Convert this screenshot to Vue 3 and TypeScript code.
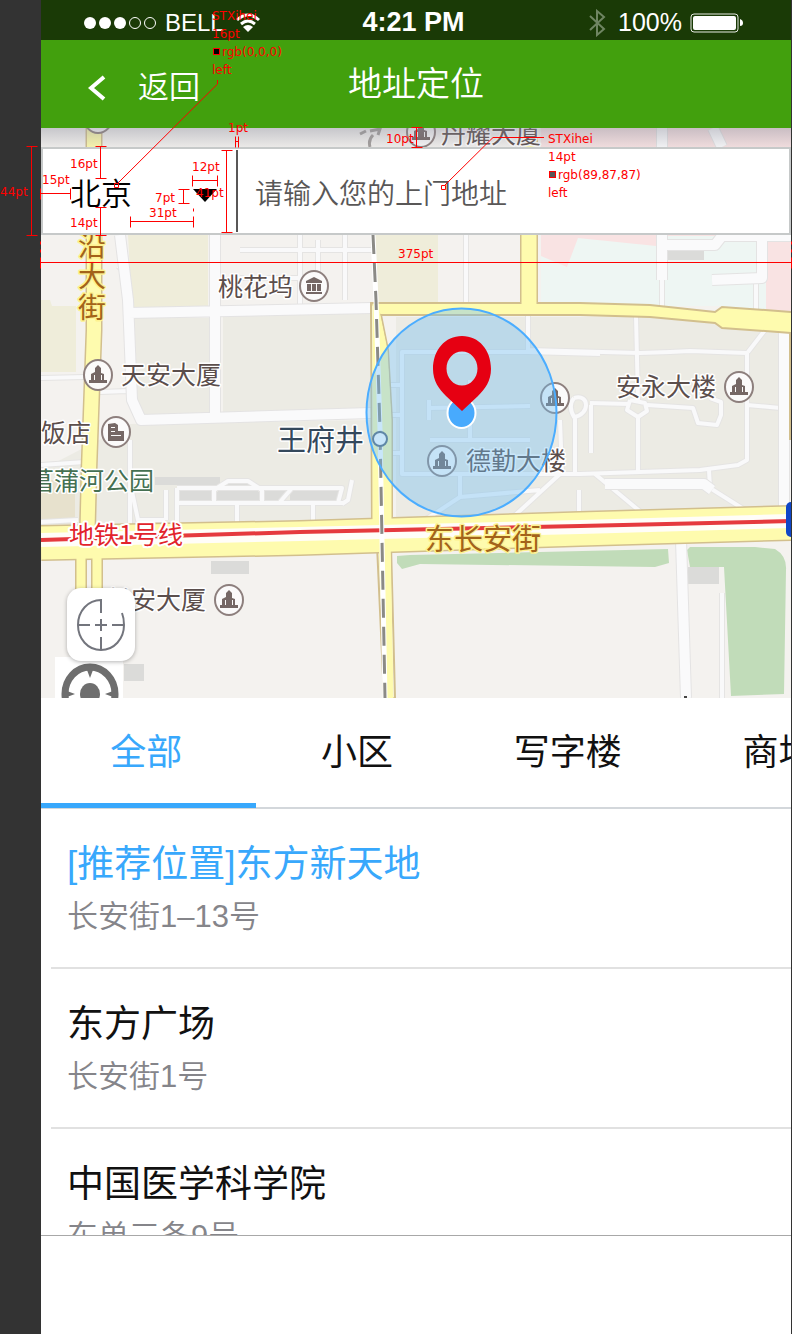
<script setup lang="ts">
import { ref } from 'vue'

interface Label { text: string; x: number; y: number; kind?: string }
interface Poi { x: number; y: number; icon: string }
interface Place { name: string; address: string; recommended?: boolean }
interface Note { text: string; x: number; y: number }

const city = ref('北京')
const address = ref('')
const activeTab = ref(0)
const tabs: string[] = ['全部', '小区', '写字楼', '商场']

const places: Place[] = [
  { name: '[推荐位置]东方新天地', address: '长安街1–13号', recommended: true },
  { name: '东方广场', address: '长安街1号' },
  { name: '中国医学科学院', address: '东单三条9号' },
]

const labels: Label[] = [
  { text: '丹耀大厦', x: 441, y: 143 },
  { text: '桃花坞', x: 218, y: 296 },
  { text: '天安大厦', x: 121, y: 384 },
  { text: '饭店', x: 41, y: 442 },
  { text: '安永大楼', x: 616, y: 396 },
  { text: '德勤大楼', x: 466, y: 470 },
  { text: '长安大厦', x: 106, y: 609 },
  { text: '菖蒲河公园', x: 29, y: 490, kind: 'park' },
  { text: '王府井', x: 277, y: 451, kind: 'station' },
  { text: '沿', x: 78, y: 256, kind: 'road' },
  { text: '大', x: 78, y: 287, kind: 'road' },
  { text: '街', x: 78, y: 318, kind: 'road' },
  { text: '东长安街', x: 425, y: 550, kind: 'road big' },
  { text: '地铁1号线', x: 69, y: 544, kind: 'metro' },
]

const pois: Poi[] = [
  { x: 98, y: 118, icon: 'tower' },
  { x: 421, y: 132, icon: 'tower' },
  { x: 98, y: 375, icon: 'tower' },
  { x: 116, y: 432, icon: 'hotel' },
  { x: 314, y: 286, icon: 'bank' },
  { x: 442, y: 461, icon: 'tower' },
  { x: 555, y: 398, icon: 'tower' },
  { x: 739, y: 387, icon: 'tower' },
  { x: 229, y: 600, icon: 'tower' },
]

const icons: Record<string, string> = {
  tower: 'M-9 8V5H-7V-1L-3 -3V-7L0 -10L3 -7V-2L6 -1V5H9V8Z M-4 0V5H-3V0Z M3 0V5H4V0Z',
  hotel: 'M-8 9V-8L-1 -9L2 -7V-1H8V9Z M-5 -5V-4H-1V-5Z M-5 -1V0H-1V-1Z M-5 3V4H5V3Z',
  bank: 'M0 -9L8 -5V-3H-8V-5Z M-7 -2H-3V5H-7Z M-2 -2H2V5H-2Z M3 -2H7V5H3Z M-8 6H8V8H-8Z',
}

const thinRoads: string[] = [
  'M41 378L85 377 M100 392L128 391L140 422L372 413',
  'M41 465L85 462 M130 440V525',
  'M118 266L126 272L132 400',
  'M300 235V310 M345 235V300 M318 240V290 M240 250H372 M240 278H300',
  'M41 522L78 520 M130 482L138 520H165 M166 490V520 M177 488V525 M177 503H345 M237 503V522 M214 502V490L228 481H248L262 490V502 M177 488H340 M280 502L292 488H342L338 503 M352 480L348 500L342 504 M313 505V522',
  'M466 235V303 M528 315V350L640 353L670 352L690 351L747 353V460L738 465L700 470L580 474H402V352H430',
  'M401 385H388 M401 415H390 M401 453H390 M402 352H528L600 354',
  'M429 400V420M429 408L530 406 M470 380V440 M430 440H530 M460 475V497L425 520 M460 497L540 490 M560 474L512 518',
  'M574 398C590 393 590 415 574 417C570 410 570 403 574 398 M575 418V474 M560 420L562 474 M590 403L630 404 M579 490V515',
  'M636 316L638 400 M630 400L627 410L638 417L647 411L645 403L630 400 M638 417V471',
  'M647 405L693 408L698 423L717 425L721 415V402L710 398 M747 405L791 409',
  'M765 330L748 352 M595 474L642 513 M709 470L710 488L745 510 M591 405V453',
  'M722 593V698 M662 235V310 M756 280V310',
]

const streets =
  'M215 235V415 M120 235L128 300L132 400L141 420L371 413 M128 313L372 308 M681 540L686 698 M662 128V280 M713 128L722 147 M662 245H715L722 236H791 M762 236V278L712 280 M605 484H704L712 490 M784 330V510'

const notes: Note[] = [
  { text: 'STXihei', x: 212, y: 20 },
  { text: '16pt', x: 212, y: 38 },
  { text: 'rgb(0,0,0)', x: 222, y: 56 },
  { text: 'left', x: 212, y: 74 },
  { text: '1pt', x: 228, y: 132 },
  { text: '12pt', x: 192, y: 171 },
  { text: '16pt', x: 70, y: 168 },
  { text: '15pt', x: 42, y: 184 },
  { text: '44pt', x: 0, y: 196 },
  { text: '14pt', x: 70, y: 227 },
  { text: '7pt', x: 155, y: 202 },
  { text: '31pt', x: 149, y: 217 },
  { text: '41pt', x: 196, y: 197 },
  { text: '10pt', x: 386, y: 143 },
  { text: '375pt', x: 398, y: 258 },
  { text: 'STXihei', x: 548, y: 143 },
  { text: '14pt', x: 548, y: 161 },
  { text: 'rgb(89,87,87)', x: 558, y: 179 },
  { text: 'left', x: 548, y: 197 },
]

const hBar = (x1: number, x2: number, y: number): string =>
  `M${x1} ${y}H${x2}M${x1} ${y - 5}v11M${x2} ${y - 5}v11`
const vBar = (x: number, y1: number, y2: number): string =>
  `M${x} ${y1}V${y2}M${x - 5} ${y1}h11M${x - 5} ${y2}h11`

const measures: string = [
  vBar(31, 146, 235),
  hBar(40, 70, 193),
  vBar(100, 146, 178),
  vBar(100, 207, 235),
  hBar(130, 193, 221),
  hBar(192, 217, 180),
  vBar(183, 189, 203),
  vBar(226, 150, 232),
  hBar(235, 238, 141),
  vBar(416, 127, 147),
  hBar(40, 791, 262),
  'M193 208v3M40 241v3M40 249v3M791 241v3M791 249v3',
].join('')
</script>

<template>
  <div class="board">
    <main class="screen">
      <div class="status">
        <div class="carrier">
          <svg class="signal" viewBox="0 0 74 14" aria-hidden="true">
            <circle cx="7" cy="7" r="6" /><circle cx="22" cy="7" r="6" /><circle cx="37" cy="7" r="6" />
            <circle class="hollow" cx="52" cy="7" r="5.5" /><circle class="hollow" cx="67" cy="7" r="5.5" />
          </svg>
          <span class="operator">BELL</span>
          <svg class="wifi" viewBox="0 0 26 20" aria-hidden="true">
            <path class="arc" d="M2 7Q13 -3 24 7M6 11Q13 5 20 11" /><path d="M8 14Q13 10 18 14L13 19Z" />
          </svg>
        </div>
        <span class="clock">4:21 PM</span>
        <div class="power">
          <svg class="bluetooth" viewBox="0 0 18 28" aria-hidden="true"><path d="M2 7L16 20L9 26V2L16 8L2 21" /></svg>
          <span>100%</span>
          <svg class="battery" viewBox="0 0 54 20" aria-hidden="true">
            <rect class="case" x="1" y="1" width="47" height="18" rx="3" /><rect x="3" y="3" width="43" height="14" rx="2" />
            <path d="M50 6Q53 7 53 10Q53 13 50 13Z" />
          </svg>
        </div>
      </div>

      <header class="nav">
        <button class="back" type="button">
          <svg viewBox="0 0 18 26" aria-hidden="true"><path d="M16 2L3 13L16 24" /></svg>
          <span>返回</span>
        </button>
        <h1>地址定位</h1>
      </header>

      <section class="map" aria-label="地图">
        <svg class="tiles" viewBox="41 128 750 570" preserveAspectRatio="xMidYMid slice">
          <defs>
            <linearGradient id="shade" x1="0" y1="0" x2="0" y2="1">
              <stop offset="0" stop-color="#888a98" stop-opacity=".42" />
              <stop offset="1" stop-color="#888a98" stop-opacity="0" />
            </linearGradient>
          </defs>
          <rect x="41" y="128" width="750" height="570" fill="#f4f2ef" />
          <g fill="#ecebe4">
            <path d="M133 318H209V413L143 416L136 400Z M223 316L370 310V412L223 417Z" />
            <path d="M41 470L130 424L371 420V525H41Z M396 317H640L700 322L783 332V508L396 520Z" />
          </g>
          <g fill="#efedda">
            <path d="M128 235H208V308L132 309Z M41 300H50L52 306H76V372H41Z M375 235H438V303H378Z" />
          </g>
          <path d="M541 128H791V312L720 306L650 303H541Z" fill="#f9e3e3" />
          <path d="M578 238L656 246L664 236H760L766 280V311L720 306H541V256L567 267Z" fill="#eef6f3" />
          <path d="M41 480H75V524H41Z" fill="#e7e1cd" />
          <g fill="#dbdbd9">
            <path d="M668 250H704V260H668Z M155 477H220V485H155Z M179 490H212V500H179Z M217 492L228 484H250L259 492V500H217Z M264 490H288L280 500H264Z M290 490H338V500H290Z" />
            <path d="M211 561H249V574H211Z M124 664H144V681H124Z M688 567H719V584H688Z" />
          </g>
          <g fill="#c1dcb9">
            <path d="M397 556L410 555L668 549L669 563L655 567L420 564L402 569L397 563Z" />
            <path d="M687 550L690 547H755L775 549Q787 556 786 570L784 694L731 696L724 567H690Z" />
          </g>

          <g class="lane-edge"><path v-for="(d, i) in thinRoads" :key="i" :d="d" /></g>
          <g class="lane"><path v-for="(d, i) in thinRoads" :key="i" :d="d" /></g>
          <path class="street-edge" :d="streets" />
          <path class="street" :d="streets" />

          <g class="avenue-edge">
            <path d="M94 128V330L89 470L87 550" stroke-width="17" />
            <path d="M81 545V600 M97 545V600" stroke-width="12" />
            <path d="M529 128V308" stroke-width="18" />
            <path d="M371 303L379 305L388 350L392 420V530H372Z M377 545H391L395 698H384Z" stroke-width="2" />
            <path d="M41 543L300 538L580 529L791 523" stroke-width="36" />
            <path d="M791 332V440" stroke-width="4" />
          </g>
          <path
            d="M372 303H580L650 305L715 312L722 307L792 312V333L722 328L715 323L650 317L580 315H380Z"
            fill="#fefbae" stroke="#d2bf8d" stroke-width="2" />
          <g class="avenue">
            <path d="M94 128V330L89 470L87 550" stroke-width="14" />
            <path d="M81 540V600 M97 540V600" stroke-width="9" />
            <path d="M529 128V308" stroke-width="15" />
            <path d="M373 304L378 306L387 350L391 420V535H373Z M379 540H390L393 698H385Z" fill="#fefbae" stroke-width="1" />
            <path d="M41 543L300 538L580 529L791 523" stroke-width="33" />
          </g>
          <path d="M41 540L300 534L580 527L791 521" stroke="#fffdf8" stroke-width="14" fill="none" />
          <path d="M41 540L300 532L580 526L791 521" stroke="#e53a3e" stroke-width="4" fill="none" />

          <path d="M373 235L376 300L380 430L382 540L385 698" stroke="#fff" stroke-width="5" fill="none" />
          <path d="M373 235L376 300L380 430L382 540L385 698" stroke="#8b8a86" stroke-width="3" stroke-dasharray="19 9" fill="none" />
          <rect x="786" y="502" width="14" height="35" rx="5" fill="#1046c6" />
          <circle cx="380" cy="439" r="7" fill="#fff" stroke="#56677a" stroke-width="2" />
          <path d="M360 134L366 131M370 131L380 129L378 135M370 147Q368 140 373 135" stroke="#a39e9b" stroke-width="3" fill="none" />
          <rect x="684" y="696" width="3" height="2" fill="#444" />

          <g v-for="(p, i) in pois" :key="i" class="poi" :transform="`translate(${p.x} ${p.y})`">
            <ellipse rx="14" ry="15" /><path :d="icons[p.icon]" />
          </g>
          <text v-for="(l, i) in labels" :key="i" class="label" :class="l.kind" :x="l.x" :y="l.y">{{ l.text }}</text>

          <ellipse cx="461.5" cy="412.5" rx="95" ry="104" fill="#6fbdf3" fill-opacity=".38" stroke="#4badff" stroke-width="2" />
          <ellipse cx="461.5" cy="413" rx="14" ry="15" fill="#48aafd" stroke="#fff" stroke-width="2" />
          <path
            d="M462 336C445 336 433 350 433 369C433 381 439 389 446 396L462 411L478 396C485 389 491 381 491 369C491 350 479 336 462 336ZM462 351.500C453.500 351.500 446.500 359 446.500 368.500C446.500 378 453.500 385.500 462 385.500C470.500 385.500 477.500 378 477.500 368.500C477.500 359 470.500 351.500 462 351.500Z"
            fill="#e60012" fill-rule="evenodd" />
          <rect x="41" y="128" width="750" height="24" fill="url(#shade)" />
        </svg>

        <form class="search" @submit.prevent>
          <label class="city">
            <span class="hidden">城市</span>
            <select v-model="city"><option>北京</option></select>
            <svg viewBox="0 0 24 14" aria-hidden="true"><path d="M0 0H24L12 13Z" /></svg>
          </label>
          <input v-model="address" type="text" aria-label="上门地址" placeholder="请输入您的上门地址">
        </form>

        <div class="tools">
          <button class="compass" type="button" aria-label="指南针">
            <svg viewBox="0 0 50 54">
              <path d="M25 15V2C12 2 2 13 2 27S12 52 25 52S48 41 48 27Q48 20 46 15M2 27H14M36 27H48M25 39V52M19 27H31M25 21V33" />
            </svg>
          </button>
          <button class="locate" type="button" aria-label="定位">
            <svg viewBox="0 0 68 41">
              <ellipse cx="35" cy="37" rx="25" ry="27" fill="none" stroke="#6e6e6e" stroke-width="7" />
              <ellipse cx="35" cy="37" rx="10" ry="11" fill="#6e6e6e" />
              <path d="M32 13H38L35 21Z M12 34L20 37L12 40Z M58 34L50 37L58 40Z" fill="#6e6e6e" />
            </svg>
          </button>
        </div>
      </section>

      <nav class="tabs">
        <button
          v-for="(tab, i) in tabs" :key="tab" type="button"
          :class="{ active: activeTab === i }" @click="activeTab = i">{{ tab }}</button>
      </nav>

      <ul class="places">
        <li v-for="place in places" :key="place.name" :class="{ recommended: place.recommended }">
          <h2>{{ place.name }}</h2>
          <p>{{ place.address }}</p>
        </li>
      </ul>
      <footer class="foot"></footer>
    </main>

    <svg class="notes" viewBox="0 0 792 1334" preserveAspectRatio="xMinYMin meet">
      <path class="measure" transform="translate(.5 .5)" :d="measures" />
      <path class="leader" d="M217.500 80V84L118 183M544 137.500H493L445 185" />
      <path class="node" d="M114.500 183.500h4v4h-4ZM441.500 185.500h4v4h-4Z" />
      <rect class="swatch" x="213.500" y="48.500" width="6" height="6" fill="#000" />
      <rect class="swatch" x="549.500" y="171.500" width="6" height="6" fill="#595757" />
      <text v-for="(n, i) in notes" :key="i" :x="n.x" :y="n.y">{{ n.text }}</text>
    </svg>
  </div>
</template>

<style>
body {
  margin: 0;
  background: #333;
}
</style>

<style scoped>
* {
  box-sizing: border-box;
}

.board {
  position: relative;
  padding: 0 1px 0 41px;
  background: #333;
  font-family: "Liberation Sans", "Noto Sans CJK SC", sans-serif;
}

.screen {
  display: flex;
  flex-direction: column;
  height: 100vh;
  background: #fff;
  overflow: hidden;
}

button,
input,
select {
  margin: 0;
  padding: 0;
  border: 0;
  background: none;
  font: inherit;
  color: inherit;
  border-radius: 0;
}

.status {
  flex: none;
  display: grid;
  grid-template-columns: 1fr auto 1fr;
  align-items: center;
  height: 40px;
  padding: 5px 47px 0 42px;
  background: #1a3a06;
  color: #fff;
  line-height: 35px;
}

.status svg {
  fill: #fff;
}

.carrier,
.power {
  display: flex;
  align-items: center;
}

.power {
  justify-content: flex-end;
  font-size: 25px;
  gap: 8px;
}

.signal {
  width: 74px;
  height: 14px;
}

.signal .hollow {
  fill: none;
  stroke: #fff;
}

.operator {
  margin-left: 8px;
  font-size: 24px;
}

.wifi {
  width: 26px;
  height: 20px;
  margin-left: 11px;
}

.wifi .arc {
  fill: none;
  stroke: #fff;
  stroke-width: 3;
}

.clock {
  font-size: 27px;
  font-weight: 700;
}

.status .bluetooth {
  width: 18px;
  height: 28px;
  margin-right: 4px;
  fill: none;
  stroke: #6f8562;
  stroke-width: 2;
}

.battery {
  width: 54px;
  height: 20px;
}

.status .case {
  fill: none;
  stroke: #e6eae3;
}

.nav {
  flex: none;
  display: grid;
  grid-template-columns: 1fr auto 1fr;
  align-items: center;
  height: 88px;
  background: #42a00d;
  color: #fff;
}

.back {
  display: flex;
  align-items: center;
  gap: 32px;
  padding-left: 47px;
  font-size: 31px;
  font-weight: 350;
  line-height: 46px;
}

.back svg {
  width: 18px;
  height: 26px;
  margin-top: 8px;
  fill: none;
  stroke: #fff;
  stroke-width: 4;
}

.back span {
  margin-top: 8px;
}

.nav h1 {
  margin: 0;
  font-size: 34px;
  font-weight: 350;
  line-height: 50px;
}

.map {
  flex: none;
  position: relative;
  height: 570px;
  padding-top: 19px;
  overflow: hidden;
}

.tiles {
  position: absolute;
  inset: 0;
  width: 100%;
  height: 100%;
}

.lane,
.lane-edge,
.street,
.street-edge,
.avenue,
.avenue-edge {
  fill: none;
  stroke-linejoin: round;
}

.lane { stroke: #f9f9fa; stroke-width: 4; }
.lane-edge { stroke: #e5e4e3; stroke-width: 6; }
.street { stroke: #fafafb; stroke-width: 10; }
.street-edge { stroke: #e4e3e3; stroke-width: 12; }
.avenue { stroke: #fefbae; }
.avenue-edge { stroke: #d2bf8d; }

.poi ellipse {
  fill: #fbfafa;
  stroke: #8d7f7d;
  stroke-width: 2;
}

.poi path {
  fill: #756765;
  fill-rule: evenodd;
}

.label {
  font-family: "Noto Sans CJK SC", sans-serif;
  font-size: 25px;
  fill: #5b4e4c;
  stroke: #fff;
  stroke-width: 3;
  stroke-linejoin: round;
  paint-order: stroke;
}

.label.park { fill: #457052; }
.label.station { font-size: 29px; fill: #34485c; }
.label.road { font-size: 28px; fill: #a3631a; stroke: #fdf28f; }
.label.big { font-size: 29px; }
.label.metro { fill: #e2232c; stroke-width: 4; }

.search {
  position: relative;
  display: flex;
  align-items: center;
  height: 88px;
  border: 2px solid #c6c9c9;
  background: #fff;
}

.city {
  position: relative;
  display: flex;
  align-items: center;
  flex: 0 0 195px;
  height: 82px;
  border-right: 2px solid #595757;
}

.city select {
  width: 100%;
  height: 82px;
  padding: 6px 0 0 27px;
  appearance: none;
  font-size: 31px;
  font-weight: 350;
  color: #000;
  outline: 0;
}

.city svg {
  position: absolute;
  right: 19px;
  top: 39px;
  width: 24px;
  height: 14px;
  pointer-events: none;
}

.hidden {
  position: absolute;
  width: 1px;
  height: 1px;
  overflow: hidden;
  clip-path: inset(50%);
}

.search input {
  flex: 1;
  min-width: 0;
  height: 82px;
  padding: 8px 0 0 17px;
  font-size: 28px;
  font-weight: 350;
  outline: 0;
}

.search input::placeholder {
  color: #595757;
  opacity: 1;
}

.tools {
  position: absolute;
  left: 14px;
  bottom: 0;
  display: flex;
  flex-direction: column;
}

.compass {
  z-index: 1;
  display: grid;
  place-items: center;
  width: 68px;
  height: 73px;
  margin: 0 0 -4px 12px;
  border-radius: 14px;
  background: #fff;
  box-shadow: 0 1px 4px rgba(0, 0, 0, .3);
}

.compass svg {
  width: 50px;
  height: 54px;
  fill: none;
  stroke: #73757d;
  stroke-width: 2;
}

.locate {
  width: 68px;
  height: 41px;
  background: #fff;
}

.locate svg {
  display: block;
  width: 68px;
  height: 41px;
}

.tabs {
  flex: none;
  display: flex;
  height: 111px;
  border-bottom: 2px solid #d3d7db;
  font-size: 36px;
  line-height: 54px;
  color: #111;
}

.tabs button {
  position: relative;
  flex: 0 0 28.1%;
  white-space: nowrap;
}

.tabs .active {
  color: #38a8fc;
}

.tabs .active::after {
  content: "";
  position: absolute;
  left: 0;
  right: -4px;
  bottom: -1px;
  height: 5px;
  background: #38a8fc;
}

.places {
  flex: 1;
  min-height: 0;
  margin: 0;
  padding: 0;
  overflow: hidden;
  list-style: none;
}

.places li {
  height: 160px;
  margin-left: 10px;
  padding: 28px 16px 0;
  border-bottom: 2px solid #e1e1e1;
}

.places h2 {
  margin: 0;
  font-size: 37px;
  font-weight: 400;
  line-height: 56px;
  color: #111;
}

.places p {
  margin: 0;
  font-size: 31px;
  font-weight: 350;
  line-height: 48px;
  color: #85858a;
}

.places .recommended h2 {
  color: #38a8fc;
}

.foot {
  flex: 0 0 99px;
  border-top: 1px solid #a8a8a8;
}

.notes {
  position: absolute;
  top: 0;
  left: 0;
  width: 100%;
  pointer-events: none;
  font-family: "DejaVu Sans", sans-serif;
  font-size: 12px;
  fill: #f00;
}

.measure,
.leader,
.node,
.swatch {
  stroke: #f00;
}

.measure,
.leader,
.node {
  fill: none;
}
</style>
